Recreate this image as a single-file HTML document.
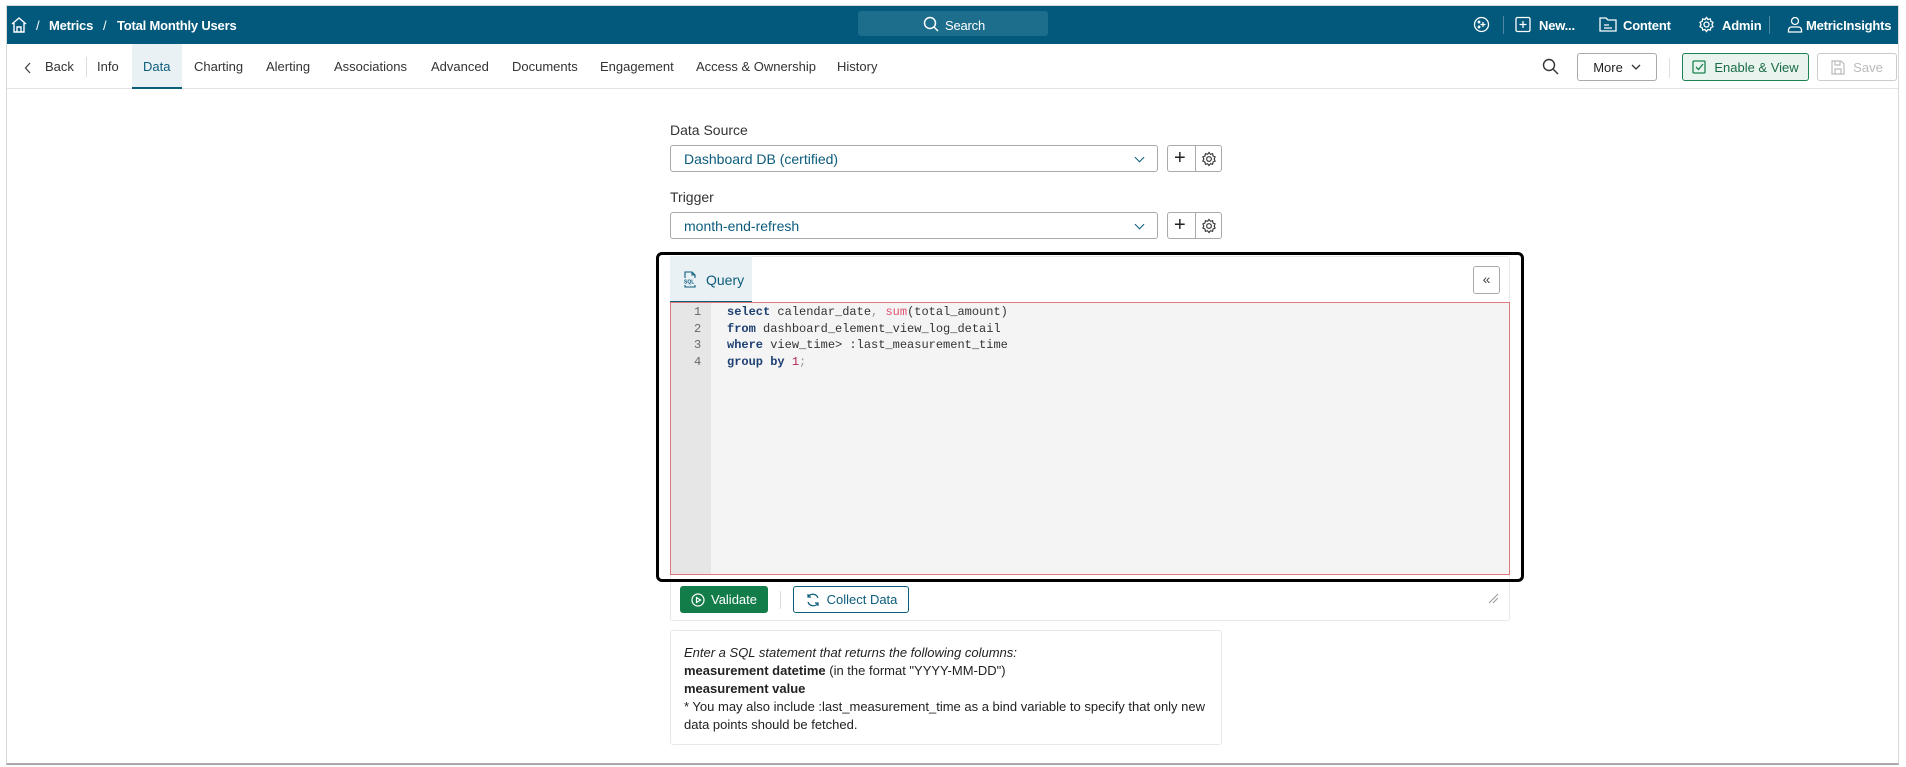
<!DOCTYPE html>
<html><head><meta charset="utf-8"><style>
*{box-sizing:border-box;margin:0;padding:0}
body{width:1906px;height:767px;background:#fff;font-family:"Liberation Sans",sans-serif;position:relative;overflow:hidden;color:#222}
.a{position:absolute}
.frame{left:6px;top:5px;width:1893px;height:760px;border:1px solid #d8d8d8;border-bottom:2px solid #aaa}
.hdr{left:7px;top:6px;width:1891px;height:38px;background:#02597c;color:#fff;font-size:13px;font-weight:bold;letter-spacing:-0.2px}
.hdr span{position:absolute;top:12px}
.tab{position:absolute;top:59px;font-size:13px;color:#333}
.btn{position:absolute;border:1px solid #bbb;border-radius:3px;font-size:13px;display:flex;align-items:center;justify-content:center;gap:8px}
.lbl{position:absolute;left:670px;font-size:14px;color:#333}
.sel{position:absolute;left:670px;width:488px;height:27px;border:1px solid #aaa;border-radius:3px;font-size:14px;color:#0c5c7c;padding:5px 13px}
.sel:after{content:"";position:absolute;right:14px;top:8px;width:6px;height:6px;border-right:1.3px solid #0c5c7c;border-bottom:1.3px solid #0c5c7c;transform:rotate(45deg)}
.pg{position:absolute;left:1167px;width:55px;height:27px;border:1px solid #aaa;border-radius:3px}
.pg:before{content:"";position:absolute;left:27px;top:0;bottom:0;border-left:1px solid #aaa}
.code{font-family:"Liberation Mono",monospace;font-size:12px;color:#333;position:absolute;left:727px}
.k{color:#1d3f72;font-weight:bold}
.ln{font-family:"Liberation Mono",monospace;font-size:12px;color:#666;position:absolute;left:694px}
.info{font-size:13px;line-height:18px;color:#222}
</style></head><body>
<div class="a frame"></div>
<div class="a hdr">
<svg class="a" style="left:3px;top:10px" width="18" height="18" viewBox="0 0 18 18" fill="none" stroke="#fff" stroke-width="1.4"><path d="M2 8 9 2l7 6M4 7v9h10V7M7 16v-5h4v5"/></svg>
<span style="left:29px;font-weight:normal">/</span><span style="left:42px">Metrics</span><span style="left:96px;font-weight:normal">/</span><span style="left:110px">Total Monthly Users</span>
<div class="a" style="left:851px;top:5px;width:190px;height:25px;background:#1d6d8d;border-radius:3px"></div>
<svg class="a" style="left:916px;top:10px" width="16" height="16" viewBox="0 0 16 16" fill="none" stroke="#fff" stroke-width="1.5"><circle cx="7" cy="7" r="5.5"/><path d="M11 11l4 4"/></svg>
<span style="left:938px;font-weight:normal">Search</span>
<svg class="a" style="left:1466px;top:10px" width="17" height="17" viewBox="0 0 17 17" fill="none" stroke="#fff" stroke-width="1.3"><circle cx="8.5" cy="8.5" r="7"/><circle cx="6" cy="6" r="0.8" fill="#fff"/><circle cx="6" cy="11" r="0.8" fill="#fff"/><path d="M10 6v5M7.5 8.5h5"/></svg>
<div class="a" style="left:1496px;top:10px;height:18px;border-left:1px solid #4d88a2"></div>
<svg class="a" style="left:1508px;top:10px" width="16" height="17" viewBox="0 0 16 17" fill="none" stroke="#fff" stroke-width="1.3"><rect x="1" y="1.5" width="14" height="14" rx="1.5"/><path d="M8 5v7M4.5 8.5h7"/></svg>
<span style="left:1532px">New...</span>
<svg class="a" style="left:1592px;top:10px" width="18" height="16" viewBox="0 0 18 16" fill="none" stroke="#fff" stroke-width="1.3"><path d="M1 2h6l2 2h8v11H1z M5 9h5M5 12h8"/></svg>
<span style="left:1616px">Content</span>
<svg class="a" style="left:1691px;top:10px" width="17" height="17" viewBox="0 0 17 17" fill="none" stroke="#fff" stroke-width="1.3"><circle cx="8.5" cy="8.5" r="2.5"/><path d="M8.5 1.5l1.5 2 2.3-.6.5 2.4 2.2 1-1 2.2 1 2.2-2.2 1-.5 2.4-2.3-.6-1.5 2-1.5-2-2.3.6-.5-2.4-2.2-1 1-2.2-1-2.2 2.2-1 .5-2.4 2.3.6z"/></svg>
<span style="left:1715px">Admin</span>
<div class="a" style="left:1762px;top:10px;height:18px;border-left:1px solid #4d88a2"></div>
<svg class="a" style="left:1780px;top:10px" width="16" height="17" viewBox="0 0 16 17" fill="none" stroke="#fff" stroke-width="1.3"><circle cx="8" cy="5" r="3.5"/><path d="M1.5 16v-2a3 3 0 0 1 3-3h7a3 3 0 0 1 3 3v2z"/></svg>
<span style="left:1799px">MetricInsights</span>
</div>
<!-- tab bar -->
<div class="a" style="left:7px;top:88px;width:1891px;border-top:1px solid #e3e3e3"></div>
<div class="a" style="left:132px;top:44px;width:50px;height:45px;background:#eaf1f4;border-bottom:2px solid #0c5c7c"></div>
<svg class="a" style="left:24px;top:62px" width="8" height="12" viewBox="0 0 8 12" fill="none" stroke="#444" stroke-width="1.3"><path d="M6 1 1.5 6 6 11"/></svg>
<span class="tab" style="left:45px">Back</span>
<div class="a" style="left:86px;top:57px;height:20px;border-left:1px solid #ddd"></div>
<span class="tab" style="left:97px">Info</span>
<span class="tab" style="left:143px;color:#0c5c7c">Data</span>
<span class="tab" style="left:194px">Charting</span>
<span class="tab" style="left:266px">Alerting</span>
<span class="tab" style="left:334px">Associations</span>
<span class="tab" style="left:431px">Advanced</span>
<span class="tab" style="left:512px">Documents</span>
<span class="tab" style="left:600px">Engagement</span>
<span class="tab" style="left:696px">Access &amp; Ownership</span>
<span class="tab" style="left:837px">History</span>
<svg class="a" style="left:1542px;top:58px" width="17" height="17" viewBox="0 0 17 17" fill="none" stroke="#333" stroke-width="1.4"><circle cx="7" cy="7" r="5.5"/><path d="M11 11l5 5"/></svg>
<div class="btn" style="left:1577px;top:53px;width:80px;height:28px;border-color:#aaa;color:#222">More <svg width="10" height="6" viewBox="0 0 10 6" fill="none" stroke="#333" stroke-width="1.3"><path d="M1 1l4 4 4-4"/></svg></div>
<div class="a" style="left:1669px;top:58px;height:20px;border-left:1px solid #ddd"></div>
<div class="btn" style="left:1682px;top:53px;width:127px;height:28px;border-color:#1a8350;background:#e9f4ee;color:#1a6b45"><svg width="14" height="14" viewBox="0 0 14 14" fill="none" stroke="#1a8350" stroke-width="1.3"><rect x="1" y="1" width="12" height="12" rx="1"/><path d="M4 7l2.5 2.5L11 4"/></svg>Enable &amp; View</div>
<div class="btn" style="left:1817px;top:53px;width:80px;height:28px;border-color:#ccc;color:#bbb"><svg width="14" height="15" viewBox="0 0 14 15" fill="none" stroke="#bbb" stroke-width="1.2"><path d="M1 1h9l3 3v10H1z M4 1v4h5V1 M4 14V9h6v5"/></svg>Save</div>
<!-- form -->
<span class="lbl" style="top:122px">Data Source</span>
<div class="sel" style="top:145px">Dashboard DB (certified)</div>
<div class="pg" style="top:145px"><span class="a" style="left:6px;top:1px;font-size:20px;color:#222">+</span><svg class="a" style="left:33px;top:5px" width="16" height="16" viewBox="0 0 17 17" fill="none" stroke="#333" stroke-width="1.2"><circle cx="8.5" cy="8.5" r="2.5"/><path d="M8.5 1.5l1.5 2 2.3-.6.5 2.4 2.2 1-1 2.2 1 2.2-2.2 1-.5 2.4-2.3-.6-1.5 2-1.5-2-2.3.6-.5-2.4-2.2-1 1-2.2-1-2.2 2.2-1 .5-2.4 2.3.6z"/></svg></div>
<span class="lbl" style="top:189px">Trigger</span>
<div class="sel" style="top:212px">month-end-refresh</div>
<div class="pg" style="top:212px"><span class="a" style="left:6px;top:1px;font-size:20px;color:#222">+</span><svg class="a" style="left:33px;top:5px" width="16" height="16" viewBox="0 0 17 17" fill="none" stroke="#333" stroke-width="1.2"><circle cx="8.5" cy="8.5" r="2.5"/><path d="M8.5 1.5l1.5 2 2.3-.6.5 2.4 2.2 1-1 2.2 1 2.2-2.2 1-.5 2.4-2.3-.6-1.5 2-1.5-2-2.3.6-.5-2.4-2.2-1 1-2.2-1-2.2 2.2-1 .5-2.4 2.3.6z"/></svg></div>
<!-- editor panel -->
<div class="a" style="left:670px;top:256px;width:840px;height:365px;border:1px solid #e8e8e8;border-radius:3px"></div>
<div class="a" style="left:670px;top:256px;width:82px;height:47px;background:#eaf1f4;border-bottom:2px solid #0c5c7c"></div>
<svg class="a" style="left:683px;top:271px" width="14" height="17" viewBox="0 0 14 17" fill="none" stroke="#0c5c7c" stroke-width="1.1"><path d="M2 7V1h7l3 3v3M9 1v3h3M2 14v2h10v-2"/><text x="1" y="12.5" font-size="5" fill="#0c5c7c" stroke="none" font-family="Liberation Sans" font-weight="bold">SQL</text></svg>
<span class="a" style="left:706px;top:272px;font-size:14px;color:#0c5c7c">Query</span>
<div class="a" style="left:1473px;top:266px;width:27px;height:28px;border:1px solid #aaa;border-radius:3px;font-size:14px;color:#444;text-align:center;line-height:25px">«</div>
<div class="a" style="left:670px;top:302px;width:840px;height:273px;background:#f4f4f4;border:1px solid #e07a7a"></div>
<div class="a" style="left:671px;top:303px;width:40px;height:271px;background:#e6e6e6"></div>
<span class="ln" style="top:305px">1</span><span class="ln" style="top:322px">2</span><span class="ln" style="top:338px">3</span><span class="ln" style="top:355px">4</span>
<span class="code" style="top:305px"><span class="k">select</span> calendar_date<span style="color:#999">,</span> <span style="color:#e0516e">sum</span>(total_amount)</span>
<span class="code" style="top:322px"><span class="k">from</span>  dashboard_element_view_log_detail</span>
<span class="code" style="top:338px"><span class="k">where</span> view_time&gt; :last_measurement_time</span>
<span class="code" style="top:355px"><span class="k">group by</span> <span style="color:#b0245a">1</span><span style="color:#999">;</span></span>
<div class="a" style="left:656px;top:252px;width:868px;height:330px;border:3px solid #000;border-radius:6px"></div>
<div class="btn" style="left:680px;top:586px;width:88px;height:27px;border:none;background:#137d4a;color:#fff;gap:6px"><svg width="14" height="14" viewBox="0 0 14 14" fill="none" stroke="#fff" stroke-width="1.2"><circle cx="7" cy="7" r="6"/><path d="M5.5 4.5v5l4-2.5z"/></svg>Validate</div>
<div class="a" style="left:780px;top:591px;height:18px;border-left:1px solid #ddd"></div>
<div class="btn" style="left:793px;top:586px;width:116px;height:27px;border-color:#0c5c7c;color:#0c5c7c;gap:6px"><svg width="16" height="16" viewBox="0 0 16 16" fill="none" stroke="#0c5c7c" stroke-width="1.2"><path d="M13 6a5.5 5.5 0 0 0-10-1M3 10a5.5 5.5 0 0 0 10 1M3 2v3h3M13 14v-3h-3"/></svg>Collect Data</div>
<svg class="a" style="left:1487px;top:592px" width="12" height="12" viewBox="0 0 12 12" stroke="#999" stroke-width="1"><path d="M2 11 11 2M6 11l5-5"/></svg>
<div class="a info" style="left:670px;top:630px;width:552px;height:115px;border:1px solid #e8e8e8;border-radius:3px;padding:13px 13px">
<i>Enter a SQL statement that returns the following columns:</i><br><b>measurement datetime</b> (in the format "YYYY-MM-DD")<br><b>measurement value</b><br>* You may also include :last_measurement_time as a bind variable to specify that only new data points should be fetched.
</div>
</body></html>
